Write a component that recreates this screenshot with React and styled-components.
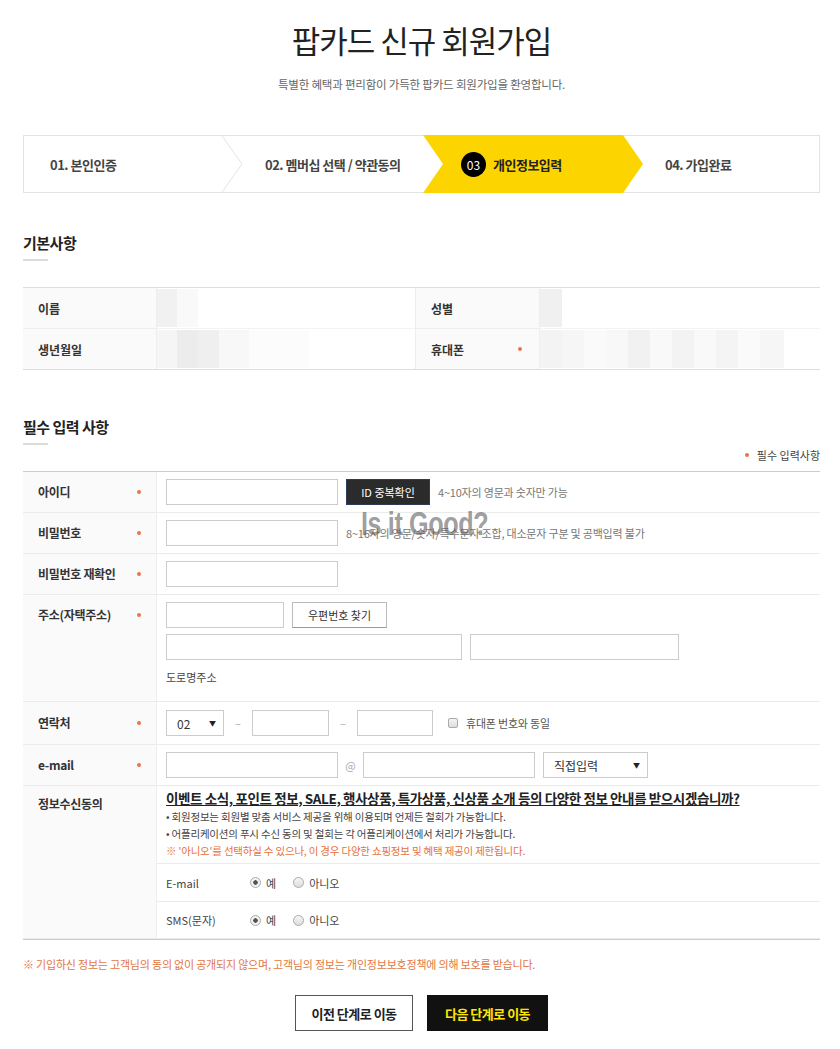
import React from "react";
import styled, { createGlobalStyle, css } from "styled-components";

const GlobalStyle = createGlobalStyle`
  html, body {
    margin: 0;
    padding: 0;
    background: #fff;
  }
  body {
    font-family: "Noto Sans CJK KR", "Noto Sans", sans-serif;
    color: #333;
  }
  * {
    box-sizing: border-box;
  }
`;

const Page = styled.div`
  width: 797px;
  margin-left: 23px;
  padding: 20px 0 18px;
`;

const Title = styled.h1`
  margin: 0;
  text-align: center;
  font-size: 31px;
  font-weight: 400;
  line-height: 40px;
  color: #222;
  letter-spacing: -1px;
`;

const Subtitle = styled.p`
  margin: 16px 0 0;
  text-align: center;
  font-size: 11.5px;
  line-height: 16px;
  color: #666;
  letter-spacing: -0.2px;
`;

/* step indicator */
const StepBar = styled.div`
  display: flex;
  height: 58px;
  margin-top: 43px;
  border: 1px solid #e3e3e3;
  background: #fff;
`;

const Step = styled.div`
  position: relative;
  flex: ${(p) => (p.$w ? `0 0 ${p.$w}px` : "1")};
  display: flex;
  align-items: center;
  padding-left: ${(p) => p.$pad}px;
  font-size: 13px;
  font-weight: 700;
  color: #444;
  letter-spacing: -0.5px;

  ${(p) =>
    p.$active &&
    css`
      z-index: 1;
      margin: -1px -20px -1px 0;
      background: #fcd400;
      color: #222;
      clip-path: polygon(
        0 0,
        calc(100% - 20px) 0,
        100% 50%,
        calc(100% - 20px) 100%,
        0 100%,
        20px 50%
      );
    `}
`;

const Chevron = styled.svg`
  position: absolute;
  top: 0;
  left: 100%;
  width: 20px;
  height: 100%;
`;

const StepNum = styled.span`
  display: inline-flex;
  align-items: center;
  justify-content: center;
  width: 25px;
  height: 25px;
  margin-right: 7px;
  border-radius: 50%;
  background: #000;
  color: #fff;
  font-size: 12px;
  font-weight: 400;
  letter-spacing: 0;
`;

/* section headings */
const SectionTitle = styled.h2`
  margin: ${(p) => p.$mt}px 0 0;
  font-size: 15px;
  font-weight: 700;
  line-height: 20px;
  color: #222;
  letter-spacing: -0.5px;

  &::after {
    content: "";
    display: block;
    width: 25px;
    height: 2px;
    margin-top: 6px;
    background: #ddd;
  }
`;

const Dot = styled.span`
  flex: 0 0 4px;
  width: 4px;
  height: 4px;
  margin-top: ${(p) => (p.$inline ? 0 : 11)}px;
  border-radius: 50%;
  background: #e8764a;
`;

/* basic info table */
const InfoGrid = styled.div`
  display: grid;
  grid-template-columns: 134px 258px 125px 1fr;
  margin-top: 26px;
  border-top: 1px solid #ddd;
  border-bottom: 1px solid #ddd;
`;

const InfoLabel = styled.div`
  height: ${(p) => (p.$first ? 41 : 40)}px;
  display: flex;
  align-items: center;
  justify-content: space-between;
  padding: 0 17px 0 15px;
  background: #fafafa;
  border-right: 1px solid #eee;
  border-left: ${(p) => (p.$sep ? "1px solid #eee" : "none")};
  border-bottom: ${(p) => (p.$first ? "1px solid #eee" : "none")};
  font-size: 12px;
  font-weight: 700;
  color: #333;
`;

const InfoValue = styled.div`
  display: flex;
  align-items: stretch;
  border-bottom: ${(p) => (p.$first ? "1px solid #f3f3f3" : "none")};
  padding: 1px 0;
`;

const Tile = styled.span`
  flex: 0 0 ${(p) => p.$w}px;
  background: ${(p) => p.$c};
`;

/* required form */
const Note = styled.div`
  display: flex;
  justify-content: flex-end;
  align-items: center;
  gap: 8px;
  margin-top: 2px;
  font-size: 11px;
  line-height: 16px;
  color: #444;
`;

const FormTable = styled.div`
  position: relative;
  margin-top: 8px;
  border-top: 1px solid #ccc;
  border-bottom: 1px solid #ccc;
`;

const Row = styled.div`
  display: grid;
  grid-template-columns: 134px 1fr;
  border-bottom: 1px solid #ebebeb;

  &:last-child {
    border-bottom: none;
  }
`;

const Label = styled.div`
  display: flex;
  align-items: flex-start;
  justify-content: space-between;
  padding: ${(p) => p.$top ?? 7}px 15px 0 15px;
  background: #fafafa;
  border-right: 1px solid #eee;
  font-size: 12px;
  font-weight: 700;
  line-height: 26px;
  color: #333;
  letter-spacing: -0.3px;
`;

const Cell = styled.div`
  display: flex;
  align-items: center;
  gap: ${(p) => p.$gap ?? 8}px;
  padding: ${(p) => p.$pad ?? "7px 9px"};
`;

const Stack = styled.div`
  display: flex;
  flex-direction: column;
  gap: 6px;
  padding: 7px 9px 15px;
`;

const Line = styled.div`
  display: flex;
  align-items: center;
  gap: 8px;
`;

const Input = styled.input`
  width: ${(p) => p.$w}px;
  height: 26px;
  margin: 0;
  padding: 0 6px;
  border: 1px solid #ccc;
  background: #fff;
  font-family: inherit;
`;

const DarkButton = styled.button`
  width: 84px;
  height: 26px;
  border: 1px solid #2c3d5a;
  background: #2b2b2b;
  color: #fff;
  font-family: inherit;
  font-size: 11px;
  padding: 0;
`;

const LightButton = styled.button`
  width: 95px;
  height: 26px;
  border: 1px solid #bbb;
  border-bottom-color: #999;
  background: #fff;
  color: #333;
  font-family: inherit;
  font-size: 11px;
  padding: 0;
`;

const Hint = styled.span`
  margin-left: ${(p) => p.$ml ?? 0}px;
  font-size: 11px;
  color: ${(p) => p.$c ?? "#777"};
  letter-spacing: -0.2px;
`;

const SubText = styled.div`
  margin-top: 2px;
  font-size: 11px;
  line-height: 18px;
  color: #444;
`;

const FakeSelect = styled.div`
  display: flex;
  align-items: center;
  justify-content: space-between;
  width: ${(p) => p.$w}px;
  height: 26px;
  padding: 0 7px 0 10px;
  border: 1px solid #ccc;
  background: #fff;
  font-size: 12px;
  color: #333;

  &::after {
    content: "▼";
    font-size: 7px;
    color: #222;
  }
`;

const Sep = styled.span`
  width: ${(p) => p.$w ?? 14}px;
  text-align: center;
  font-size: 11px;
  color: #aaa;
`;

const Check = styled.span`
  width: 10px;
  height: 10px;
  margin: 0 2px 0 15px;
  border: 1px solid #aaa;
  border-radius: 2px;
  background: linear-gradient(#f4f4f4, #ddd);
`;

/* consent */
const ConsentCell = styled.div`
  display: flex;
  flex-direction: column;
`;

const ConsentTop = styled.div`
  padding: 2px 9px 4px;
`;

const ConsentTitle = styled.div`
  font-size: 13.5px;
  font-weight: 700;
  line-height: 20px;
  color: #222;
  text-decoration: underline;
  letter-spacing: -0.4px;
`;

const ConsentLine = styled.div`
  font-size: 10.5px;
  line-height: 17px;
  color: ${(p) => (p.$warn ? "#e8703d" : "#444")};
  letter-spacing: -0.2px;
`;

const OptRow = styled.div`
  display: flex;
  align-items: center;
  height: ${(p) => p.$h}px;
  padding-left: 9px;
  border-top: 1px solid #ebebeb;
  font-size: 11px;
  color: #444;
`;

const OptName = styled.span`
  width: 84px;
`;

const Radio = styled.label`
  display: inline-flex;
  align-items: center;
  gap: 5px;
  margin-right: 17px;
  font-size: 11px;
  color: #444;

  &::before {
    content: "";
    width: 9px;
    height: 9px;
    border: 1px solid #aaa;
    border-radius: 50%;
    background: ${(p) =>
      p.$on
        ? "radial-gradient(circle, #555 0 2px, #f2f2f2 2.5px)"
        : "linear-gradient(#f6f6f6, #ddd)"};
  }
`;

const Watermark = styled.div`
  position: absolute;
  left: 338px;
  top: 33px;
  font-family: "Liberation Sans", Arial, sans-serif;
  font-size: 34px;
  font-weight: 700;
  line-height: 36px;
  color: rgba(95, 95, 95, 0.62);
  transform: scaleX(0.74);
  transform-origin: left top;
  letter-spacing: -0.5px;
  pointer-events: none;
`;

const Footnote = styled.p`
  margin: 16px 0 0;
  font-size: 11px;
  line-height: 16px;
  color: #e2763f;
  letter-spacing: -0.2px;
`;

const Actions = styled.div`
  display: flex;
  justify-content: center;
  gap: 14px;
  margin-top: 23px;
`;

const NavButton = styled.button`
  width: ${(p) => p.$w}px;
  height: 36px;
  padding: 0;
  border: 1px solid ${(p) => (p.$primary ? "#111" : "#555")};
  background: ${(p) => (p.$primary ? "#111" : "#fff")};
  color: ${(p) => (p.$primary ? "#ffe600" : "#222")};
  font-family: inherit;
  font-size: 13px;
  font-weight: 700;
  letter-spacing: -0.5px;
`;

const mosaic = {
  name: [
    [20, "#f1f1f1"],
    [21, "#f9f9f9"],
  ],
  birth: [
    [20, "#f5f5f5"],
    [21, "#ececec"],
    [21, "#efefef"],
    [30, "#f8f8f8"],
    [60, "#fcfcfc"],
  ],
  gender: [[22, "#f0f0f0"]],
  phone: [
    [22, "#f3f3f3"],
    [22, "#f6f6f6"],
    [22, "#fafafa"],
    [22, "#f8f8f8"],
    [22, "#f1f1f1"],
    [22, "#f9f9f9"],
    [22, "#f3f3f3"],
    [22, "#f9f9f9"],
    [22, "#f4f4f4"],
    [22, "#fafafa"],
    [24, "#f6f6f6"],
  ],
};

function Mosaic({ tiles, first }) {
  return (
    <InfoValue $first={first}>
      {tiles.map(([w, c], i) => (
        <Tile key={i} $w={w} $c={c} />
      ))}
    </InfoValue>
  );
}

export default function App() {
  return (
    <>
      <GlobalStyle />
      <Page>
        <Title>팝카드 신규 회원가입</Title>
        <Subtitle>특별한 혜택과 편리함이 가득한 팝카드 회원가입을 환영합니다.</Subtitle>

        <StepBar>
          <Step $w={198} $pad={26}>
            01. 본인인증
            <Chevron viewBox="0 0 20 56" preserveAspectRatio="none">
              <polyline points="0,0 20,28 0,56" fill="none" stroke="#e3e3e3" strokeWidth="1" />
            </Chevron>
          </Step>
          <Step $w={201} $pad={43}>02. 멤버십 선택 / 약관동의</Step>
          <Step $w={220} $pad={38} $active>
            <StepNum>03</StepNum>
            개인정보입력
          </Step>
          <Step $pad={42}>04. 가입완료</Step>
        </StepBar>

        <SectionTitle $mt={40}>기본사항</SectionTitle>
        <InfoGrid>
          <InfoLabel $first>이름</InfoLabel>
          <Mosaic tiles={mosaic.name} first />
          <InfoLabel $first $sep>성별</InfoLabel>
          <Mosaic tiles={mosaic.gender} first />
          <InfoLabel>생년월일</InfoLabel>
          <Mosaic tiles={mosaic.birth} />
          <InfoLabel $sep>
            휴대폰 <Dot $inline />
          </InfoLabel>
          <Mosaic tiles={mosaic.phone} />
        </InfoGrid>

        <SectionTitle $mt={47}>필수 입력 사항</SectionTitle>
        <Note>
          <Dot $inline />
          필수 입력사항
        </Note>

        <FormTable>
          <Row>
            <Label>
              아이디 <Dot />
            </Label>
            <Cell>
              <Input $w={172} />
              <DarkButton>ID 중복확인</DarkButton>
              <Hint>4~10자의 영문과 숫자만 가능</Hint>
            </Cell>
          </Row>
          <Row>
            <Label>
              비밀번호 <Dot />
            </Label>
            <Cell>
              <Input $w={172} type="password" />
              <Hint>8~16자의 영문/숫자/특수문자 조합, 대소문자 구분 및 공백입력 불가</Hint>
            </Cell>
          </Row>
          <Row>
            <Label>
              비밀번호 재확인 <Dot />
            </Label>
            <Cell>
              <Input $w={172} type="password" />
            </Cell>
          </Row>
          <Row>
            <Label>
              주소(자택주소) <Dot />
            </Label>
            <Stack>
              <Line>
                <Input $w={118} />
                <LightButton>우편번호 찾기</LightButton>
              </Line>
              <Line>
                <Input $w={296} />
                <Input $w={209} />
              </Line>
              <SubText>도로명주소</SubText>
            </Stack>
          </Row>
          <Row>
            <Label $top={8}>
              연락처 <Dot />
            </Label>
            <Cell $pad="8px 9px" $gap={0}>
              <FakeSelect $w={58}>02</FakeSelect>
              <Sep $w={28}>–</Sep>
              <Input $w={77} />
              <Sep $w={28}>–</Sep>
              <Input $w={76} />
              <Check />
              <Hint $ml={6} $c="#555">
                휴대폰 번호와 동일
              </Hint>
            </Cell>
          </Row>
          <Row>
            <Label>
              e-mail <Dot />
            </Label>
            <Cell $gap={0}>
              <Input $w={172} />
              <Sep $w={25}>@</Sep>
              <Input $w={172} />
              <Sep $w={8} />
              <FakeSelect $w={105}>직접입력</FakeSelect>
            </Cell>
          </Row>
          <Row>
            <Label $top={5}>정보수신동의</Label>
            <ConsentCell>
              <ConsentTop>
                <ConsentTitle>
                  이벤트 소식, 포인트 정보, SALE, 행사상품, 특가상품, 신상품 소개 등의 다양한 정보 안내를 받으시겠습니까?
                </ConsentTitle>
                <ConsentLine>• 회원정보는 회원별 맞춤 서비스 제공을 위해 이용되며 언제든 철회가 가능합니다.</ConsentLine>
                <ConsentLine>• 어플리케이션의 푸시 수신 동의 및 철회는 각 어플리케이션에서 처리가 가능합니다.</ConsentLine>
                <ConsentLine $warn>
                  ※ '아니오'를 선택하실 수 있으나, 이 경우 다양한 쇼핑정보 및 혜택 제공이 제한됩니다.
                </ConsentLine>
              </ConsentTop>
              <OptRow $h={38}>
                <OptName>E-mail</OptName>
                <Radio $on>예</Radio>
                <Radio>아니오</Radio>
              </OptRow>
              <OptRow $h={37}>
                <OptName>SMS(문자)</OptName>
                <Radio $on>예</Radio>
                <Radio>아니오</Radio>
              </OptRow>
            </ConsentCell>
          </Row>
          <Watermark>Is it Good?</Watermark>
        </FormTable>

        <Footnote>
          ※ 기입하신 정보는 고객님의 동의 없이 공개되지 않으며, 고객님의 정보는 개인정보보호정책에 의해 보호를 받습니다.
        </Footnote>

        <Actions>
          <NavButton $w={118}>이전 단계로 이동</NavButton>
          <NavButton $w={121} $primary>
            다음 단계로 이동
          </NavButton>
        </Actions>
      </Page>
    </>
  );
}
